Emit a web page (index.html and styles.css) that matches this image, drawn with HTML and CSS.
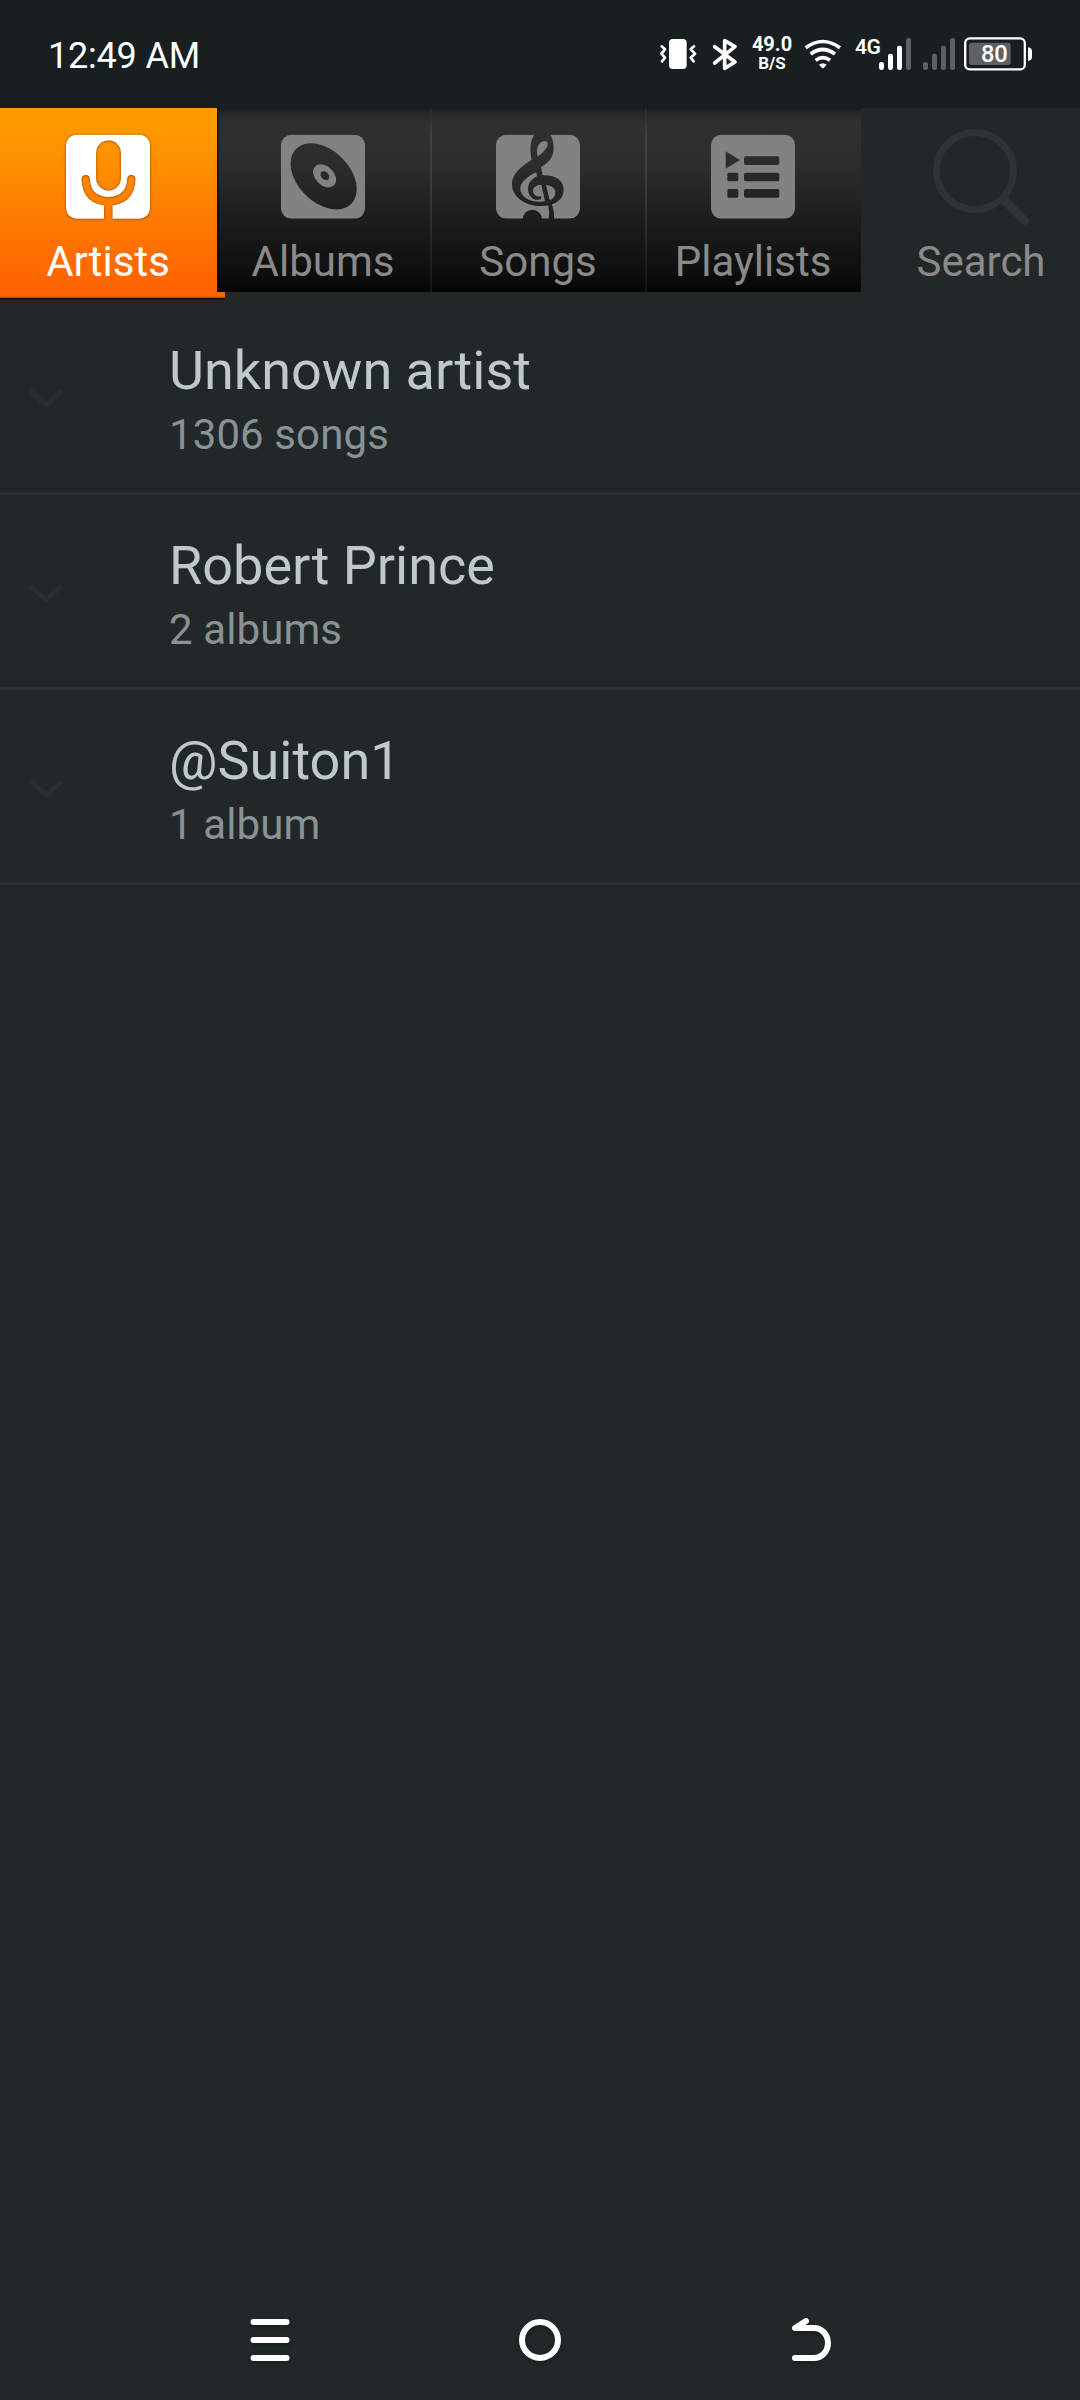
FILE: index.html
```html
<!DOCTYPE html>
<html lang="en">
<head>
<meta charset="utf-8">
<title>Music</title>
<link rel="stylesheet" href="styles.css">
</head>
<body>
<div class="screen">
  <header class="status">
    <div class="clock">12:49 AM</div>
    <div class="indicators">
      <svg class="vibrate" width="40" height="70" viewBox="54 0 120 210"><rect x="87" y="57" width="53" height="90" rx="11" fill="#fff"/><path d="M65 79l10 9-11 13 11 12-9 11M162 79l-10 9 13 13-13 12 9 11" fill="none" stroke="#fff" stroke-width="8" stroke-linecap="round" stroke-linejoin="round"/></svg>
      <svg class="bluetooth" width="26" height="70" viewBox="216 0 78 210"><path d="M224 80l61 46-31 19V62l31 18-61 49" fill="none" stroke="#fff" stroke-width="11" stroke-linecap="round" stroke-linejoin="round"/></svg>
      <div class="speed"><span class="rate">49.0</span><span class="unit">B/S</span></div>
      <svg class="wifi" width="38" height="70" viewBox="492 0 114 210"><g fill="none" stroke="#fff" stroke-width="11"><path d="M497 83Q548 46 600 83"/><path d="M512 102Q548 75 585 102"/><path d="M527 121Q548 105 570 121"/></g><path d="M537 134Q548 125 560 134L551 144Q548 146 546 144Z" fill="#fff"/></svg>
      <span class="network">4G</span>
      <svg class="signal" width="34" height="70" viewBox="114 0 102 210"><g fill="#fff"><rect x="117" y="126" width="15" height="24" rx="7"/><rect x="144" y="101" width="15" height="49" rx="7"/><rect x="171" y="77" width="15" height="73" rx="7"/></g><rect x="198" y="54" width="15" height="96" rx="7" fill="#5d6163"/></svg>
      <svg class="signal-two" width="34" height="70" viewBox="246 0 102 210"><g fill="#5d6163"><rect x="249" y="126" width="15" height="24" rx="7"/><rect x="276" y="101" width="15" height="49" rx="7"/><rect x="303" y="77" width="15" height="73" rx="7"/><rect x="330" y="54" width="15" height="96" rx="7"/></g></svg>
      <svg class="battery" width="70" height="70" viewBox="369 0 210 210"><rect x="375.500" y="55" width="179" height="93" rx="14" fill="none" stroke="#fff" stroke-width="7"/><rect x="387" y="68" width="125" height="67" rx="8" fill="#5d6163"/><path d="M564 82q12 2 12 12v18q0 9-12 11z" fill="#fff"/><text x="463" y="127" text-anchor="middle" class="charge">80</text></svg>
    </div>
  </header>

  <nav class="tabs">
    <div class="tab selected">
      <svg class="icon" viewBox="180 87 288 288"><defs><filter id="soft" x="-20%" y="-20%" width="140%" height="140%"><feDropShadow dx="0" dy="1" stdDeviation="5" flood-color="#7a3a00" flood-opacity=".9"/></filter><mask id="mic"><rect x="198" y="104" width="252" height="252" rx="32" fill="#fff"/><rect x="288" y="121" width="75" height="151" rx="37" fill="#000"/><path d="M257 237Q260 302 325 304Q391 302 394 237M325 304V360" fill="none" stroke="#000" stroke-width="26" stroke-linecap="round"/></mask></defs><g filter="url(#soft)"><rect x="198" y="104" width="252" height="252" rx="32" fill="#fff" mask="url(#mic)"/></g></svg>
      <span>Artists</span>
    </div>
    <div class="tab">
      <svg class="icon" viewBox="195 87 288 288"><mask id="disc"><rect x="213" y="104" width="252" height="252" rx="31" fill="#fff"/><g transform="rotate(45 341 229)"><ellipse cx="341" cy="229" rx="117" ry="78" fill="#000"/><ellipse cx="342" cy="226" rx="40" ry="28" fill="#fff"/><ellipse cx="342" cy="225" rx="15" ry="11" fill="#000"/></g></mask><rect x="213" y="104" width="252" height="252" fill="#828282" mask="url(#disc)"/></svg>
      <span>Albums</span>
    </div>
    <div class="tab">
      <svg class="icon" viewBox="180 87 288 288"><mask id="clef"><rect x="198" y="104" width="252" height="252" rx="31" fill="#fff"/><path d="M317 98C302 115 297 145 305 179C282 195 246 217 246 252C246 294 289 318 332 318C375 318 401 299 401 270C401 240 376 224 338 226L333 201C358 187 371 169 371 143C371 124 365 108 357 98ZM323 170C317 146 325 125 344 123C362 124 354 148 323 170ZM318 217L322 228C299 239 291 258 295 275C300 295 316 303 333 298L334 289C319 291 309 284 309 272C309 262 318 255 334 254L345 304C307 309 272 295 271 266C271 246 294 229 318 217ZM348 255C368 257 377 267 376 278C375 290 367 298 359 301Z" fill="#000" fill-rule="evenodd"/><path d="M346 301L355 318Q360 341 356 360H372Q374 336 365 311L359 298Z" fill="#000"/><ellipse cx="307" cy="359" rx="29" ry="30" fill="#000"/></mask><rect x="198" y="104" width="252" height="252" fill="#828282" mask="url(#clef)"/></svg>
      <span>Songs</span>
    </div>
    <div class="tab">
      <svg class="icon" viewBox="195 87 288 288"><mask id="list"><rect x="213" y="104" width="252" height="252" rx="31" fill="#fff"/><path d="M257 154L300 180L257 206Z"/><rect x="312" y="169" width="106" height="26" rx="5"/><rect x="262" y="218" width="33" height="26" rx="5"/><rect x="312" y="218" width="106" height="26" rx="5"/><rect x="262" y="267" width="33" height="26" rx="5"/><rect x="312" y="267" width="106" height="26" rx="5"/></mask><rect x="213" y="104" width="252" height="252" fill="#828282" mask="url(#list)"/></svg>
      <span>Playlists</span>
    </div>
    <div class="tab search">
      <svg class="icon" viewBox="279 87 288 288"><g fill="none" stroke="#303234"><circle cx="405" cy="213" r="115.500" stroke-width="21"/><path d="M491 299L554 362" stroke-width="26" stroke-linecap="round"/></g></svg>
      <span>Search</span>
    </div>
  </nav>

  <main class="list">
    <div class="row"><svg class="chevron" width="36" height="22" viewBox="0 0 36 22"><path d="M2 3L18 17L34 3" fill="none" stroke="#292f30" stroke-width="5"/></svg><div><div class="name">Unknown artist</div><div class="count">1306 songs</div></div></div>
    <div class="row"><svg class="chevron" width="36" height="22" viewBox="0 0 36 22"><path d="M2 3L18 17L34 3" fill="none" stroke="#292f30" stroke-width="5"/></svg><div><div class="name">Robert Prince</div><div class="count">2 albums</div></div></div>
    <div class="row"><svg class="chevron" width="36" height="22" viewBox="0 0 36 22"><path d="M2 3L18 17L34 3" fill="none" stroke="#292f30" stroke-width="5"/></svg><div><div class="name">@Suiton1</div><div class="count">1 album</div></div></div>
  </main>

  <footer class="navbar">
    <svg width="60" height="60" viewBox="240 2310 60 60"><path d="M253.500 2322H286.500M253.500 2340H286.500M253.500 2358H286.500" stroke="#fff" stroke-width="6" stroke-linecap="round"/></svg>
    <svg width="60" height="60" viewBox="510 2310 60 60"><circle cx="540" cy="2340" r="18" fill="none" stroke="#fff" stroke-width="6"/></svg>
    <svg width="60" height="60" viewBox="780 2310 60 60"><path d="M795 2358H814A14 15 0 0 0 814 2328H795L806 2321" fill="none" stroke="#fff" stroke-width="6" stroke-linecap="round" stroke-linejoin="round"/></svg>
  </footer>
</div>
</body>
</html>
```
FILE: styles.css
```css
* { box-sizing: border-box; }
body { margin: 0; background: #222728; font-family: Roboto, sans-serif; }
svg { display: block; flex: none; }
.screen { width: 1080px; height: 2400px; display: flex; flex-direction: column; overflow: hidden; }

.status { height: 108px; flex: none; background: #191e20; display: flex; justify-content: space-between; color: #fff; padding: 20px 47px 18px 48px; }
.clock { font-size: 36px; line-height: 70px; padding-top: 1px; letter-spacing: -0.2px; white-space: nowrap; }
.indicators { display: flex; height: 70px; }
.bluetooth { margin-left: 14px; }
.speed { width: 42px; margin: 14px 11px 0 13px; display: flex; flex-direction: column; align-items: center; font-weight: 700; }
.rate { font-size: 20px; line-height: 20px; }
.unit { font-size: 17px; line-height: 19px; font-weight: 700; }
.network { width: 26px; margin: 16px -3px 0 13px; font-size: 21px; line-height: 22px; font-weight: 600; letter-spacing: -0.5px; }
.signal-two { margin-left: 10px; }
.battery { margin-left: 7px; }
.charge { font-size: 71px; font-weight: 500; fill: #fff; }

.tabs { height: 192px; flex: none; display: grid; grid-template-columns: 216px 216px 215px 214px 240px; align-items: start; }
.tab { position: relative; height: 184px; padding-top: 21px; display: flex; flex-direction: column; align-items: center; color: #8a8a8a; font-size: 42px; line-height: 50px; background: linear-gradient(#1b1b1b 0, #272727 5px, #303030 14px, #2d2d2d 30%, #191919 68%, #0e0e0e 90%, #050505 100%); }
.tab:nth-child(2), .tab:nth-child(3) { border-right: 2px solid; border-image: linear-gradient(#262626, #414141 15%, #3b3b3b 45%, #141414) 1; }
.tab:nth-child(3) { padding-right: 1px; }
.tab:nth-child(4) { padding-right: 2px; }
.icon { width: 96px; height: 96px; }
.tab span { margin-top: 12px; position: relative; }
.tab.search { background: none; }
.tab.selected { color: #fff; background: none; z-index: 1; }
/* The selected tab drops below the bar and ends in a short foot. */
.selected::before { content: ""; position: absolute; left: 0; top: 0; width: 217px; height: 190px; background: linear-gradient(#ff9c00, #ff9500 20%, #ff7400 68%, #ff6500 92%, #ff6200); box-shadow: 1px 0 2px #000; clip-path: inset(0 -4px 6px 0); }
.selected::after { content: ""; position: absolute; left: 0; top: 184px; width: 225px; height: 8px; background: linear-gradient(#ff6600 0 4px, #ee5e00 4px 5px, #bd4b00 5px 6px, #120d08 6px 7px, #16191a 7px); }
.selected .icon { position: relative; }

.list { flex: 1; }
.row { height: 195px; border-bottom: 3px solid #2c3032; display: flex; padding: 40px 0 0 28px; }
.chevron { margin-top: 48px; margin-right: 105px; }
.name { font-size: 54px; line-height: 62px; color: #bec8cd; }
.count { font-size: 42px; line-height: 50px; margin-top: 8px; letter-spacing: 0.1px; color: #899294; }

.navbar { height: 120px; flex: none; display: flex; justify-content: space-between; align-items: center; padding: 0 240px; }
.navbar svg { filter: drop-shadow(0 2px 2px #0004); }
```
